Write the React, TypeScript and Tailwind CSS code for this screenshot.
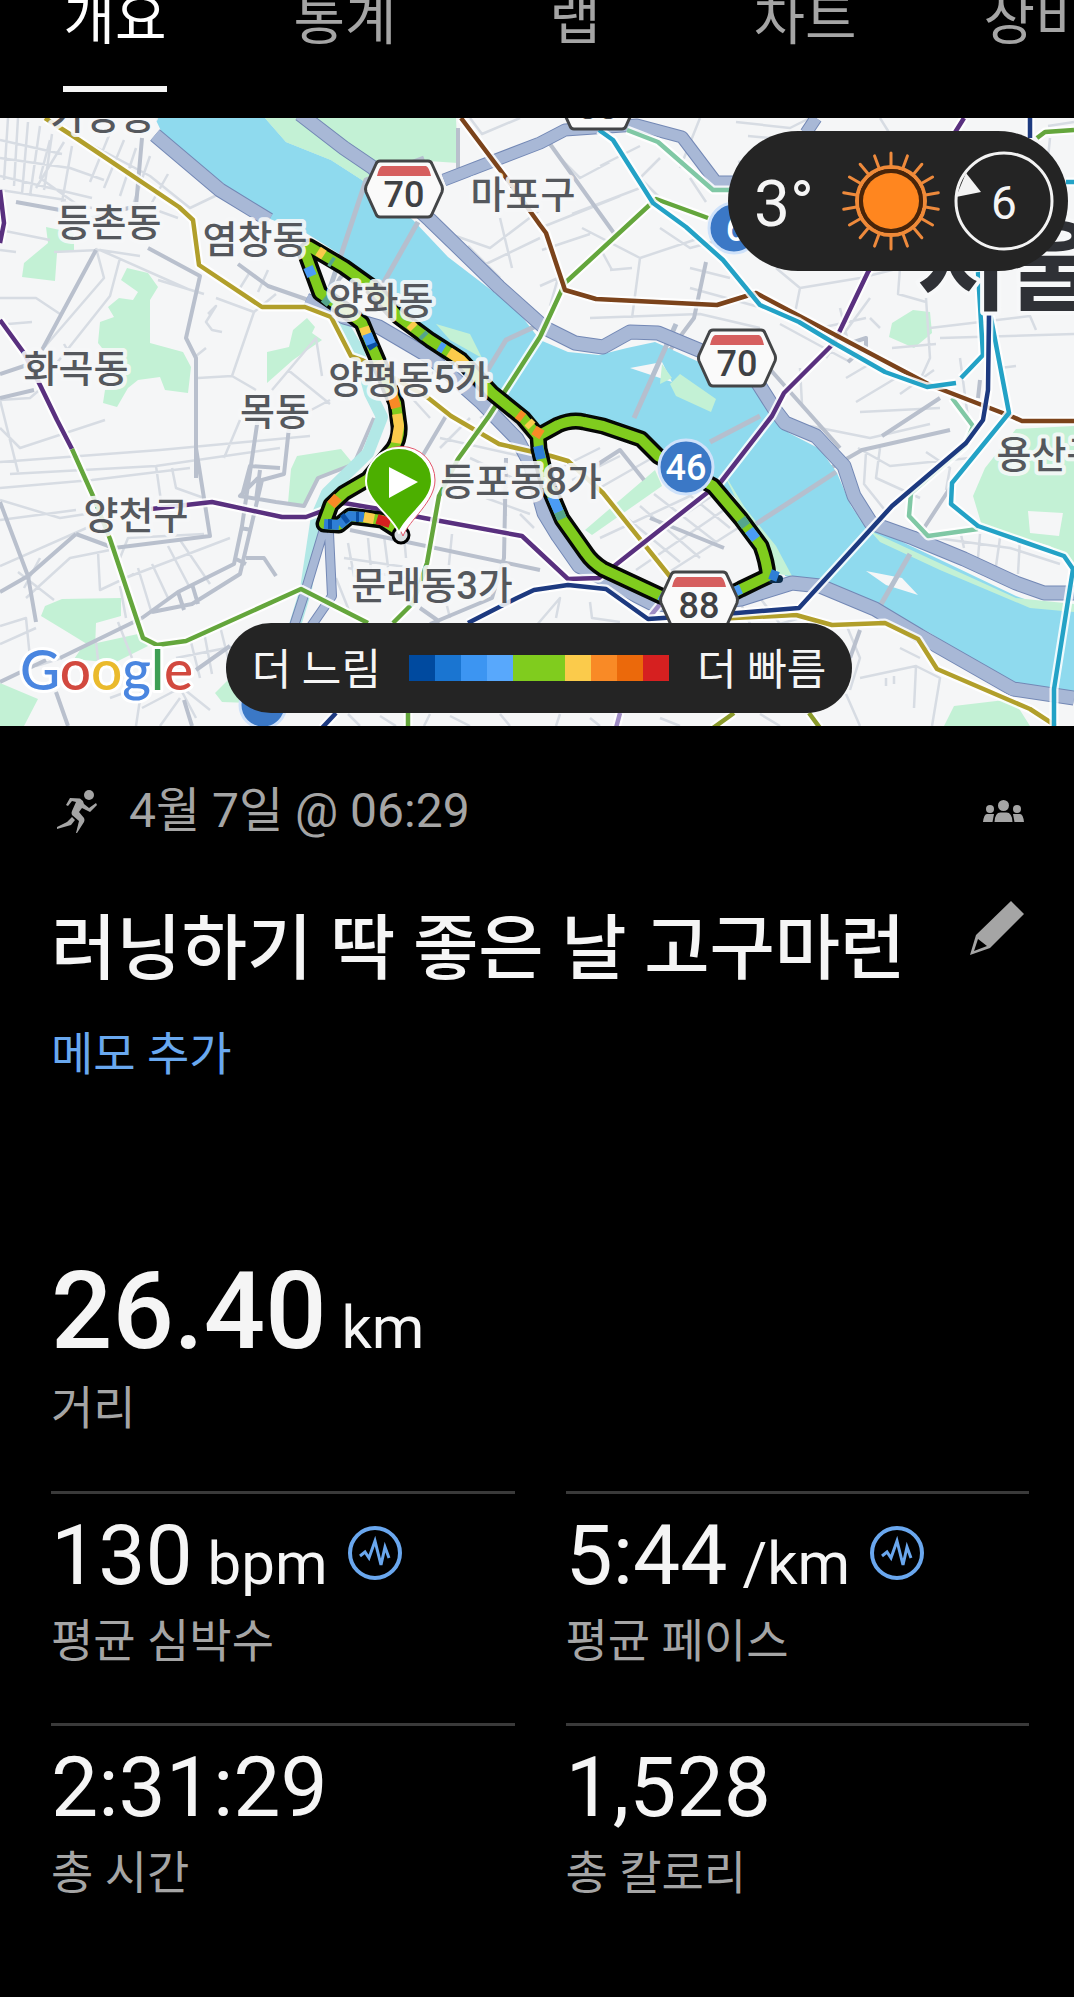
import type { ReactNode } from 'react';

const tabs = ['개요', '통계', '랩', '차트', '장비'];

const paceScale = [
  'bg-[#004a9f]',
  'bg-[#1a75d1]',
  'bg-[#3c95f2]',
  'bg-[#58a8fc]',
  'bg-[#80cc1e]',
  'bg-[#80cc1e]',
  'bg-[#fbcb4b]',
  'bg-[#f98a26]',
  'bg-[#eb690b]',
  'bg-[#d62020]',
];

const stats = [
  { value: '130', unit: 'bpm', label: '평균 심박수', chart: true },
  { value: '5:44', unit: '/km', label: '평균 페이스', chart: true },
  { value: '2:31:29', label: '총 시간' },
  { value: '1,528', label: '총 칼로리' },
];

const parks = [
  'M46 109L74 115V132L57 135L55 163L22 159L24 145L48 125Z',
  'M127 150L148 155L158 169L150 182V225L183 234L191 249L188 275L165 272L160 259L138 262L128 270L117 289L103 285L105 272L114 269V245L98 225L100 204L114 199L108 189L119 180L133 182L138 174L121 162Z',
  'M307 200L315 209L312 215L322 222L293 242L267 265V234L289 229L293 212Z',
  'M265 0H456L458 45L413 42L375 75L362 62L331 42L286 24Z',
  'M45 488L62 481L121 480V498L96 505L95 531L69 515L41 498Z',
  'M83 528L138 516L148 528L114 545L74 541Z',
  'M0 565L38 581L24 608H0Z',
  'M215 575L240 550L250 585L222 584Z',
  'M297 338L341 331L355 348L320 358L303 388L288 385L291 351Z',
  'M913 192L930 194L932 215L914 230L889 219L892 205Z',
  'M1016 311L1074 308V445L1050 428L982 408L973 378L985 350Z',
  'M944 608L954 588L1013 581L1030 608Z',
  'M585 412L655 352L662 368L592 417Z',
];

const river =
  'M155 0H265L286 24L331 42L362 62L385 80L413 102L448 139L482 165L517 192L540 222L568 234L599 237L627 230L655 224L699 244L754 269L768 289L775 302L789 315L820 331L837 355L851 388L865 408L896 421L947 445L1016 478L1044 488H1074V573L1016 570L930 515L889 495L830 468L785 458L782 441L772 425L741 385L720 365L651 328L637 318L568 305L544 318L517 292L492 268L468 250L430 222L399 195L372 162L344 139L306 115L265 99L207 52L162 15Z';

const minorRoads = [
  'M0 22L62 36M0 40L70 50L104 62M0 58L92 80M0 72L66 82M8 0L4 62M18 0L14 68M28 4L22 76M40 8L30 78M52 16L44 72M64 24L36 70M72 28L62 84L92 90',
  'M50 22L40 60L82 90M90 26L150 58L190 90L240 66M112 10L90 64M124 22L104 70M136 30L120 78M150 38L134 84L178 100M168 56L150 88',
  'M0 112L50 122M0 132L16 134M54 134L100 132L140 138M100 132L190 172M96 130L104 160L42 232M120 140L110 178L56 246',
  'M0 180H36L60 196M8 206L32 204M64 226L72 240M0 282L30 280L44 268M0 282L18 354M0 310L20 330L105 302',
  'M158 162L204 176M216 180L254 194L232 258L198 260M254 194L276 176M232 258L256 272M240 170L250 154M258 174L268 152M208 196L216 188L206 204L212 212L222 214M288 252L330 286',
  'M272 272L316 220L322 258M330 282L296 300M196 238L206 230',
  'M0 344L160 332L310 318M10 356L156 348L280 330M0 370L92 362L190 350M156 348L162 390M172 350L176 370L204 380M0 382L60 400L86 396M224 340L240 302',
  'M0 402L76 392M0 448L100 404M24 470L40 440M54 482L18 454M98 434L100 472L134 456M120 440L128 420L204 416M138 450L152 496M152 446L168 480M168 428L190 470M180 422L210 466M120 462L230 420',
  'M26 480L70 440L110 432M0 508L26 500L30 540M0 526L36 510M36 548L62 540M96 524L100 560M118 504L132 540M120 468L126 500',
  'M110 580L142 568L136 608M142 590L180 570L196 600M170 560L210 592M180 580L160 608M190 520L200 560M204 514L212 556M220 508L228 540M176 540L236 528',
  'M348 425L354 458L420 470M368 420L372 462M384 418L390 464M344 440L426 452M348 450L416 462M404 418L406 440M336 460L352 500M440 460L450 500M452 416L448 456',
  'M480 300L500 290L530 320M440 320L520 338M470 340L530 368M500 350L506 398M486 380L530 396M520 396L534 410M470 300L440 330',
  'M420 260L470 240M410 278L430 300M450 116L490 130L540 92M468 128L500 160M486 146L540 120M500 100L512 150',
  'M470 0L482 16L520 0M560 40L580 60L610 44M600 48L640 28M572 96L640 70M582 110L640 140L700 120M640 140L632 200M610 152L632 150M600 130L612 152M590 200L700 196L760 210',
  'M660 40L640 60L660 80M690 60L706 84M700 0L680 50M540 110L620 78M542 132L590 116M540 168L558 160L550 188M660 110L690 130L720 122M690 150L730 160M690 170L770 192',
  'M736 4L790 10L810 0M748 18L790 22M738 44L760 40M880 0L890 16M1048 8L1074 4M1050 20L1046 60',
  'M776 150L800 170L794 200M800 170L860 160L900 150M820 210L866 200M826 240L870 180M840 190L850 232M870 200L880 210M800 250L802 286M780 206L850 244M846 260L880 240M892 230L936 226M926 180L930 240L920 262',
  'M930 210L1030 198L1036 212M940 220L1074 216M990 160L1000 190M900 276L934 252M856 284L896 260M1000 250L1016 248M860 294L940 290M900 150L898 176L926 184M960 240L968 300',
  'M810 308L870 320L930 306M858 330L890 348L970 340M866 334L864 366L888 396M880 330L876 360L920 380M926 334L950 350L946 372M936 420L1010 430L1060 446M960 412L964 430M980 416L978 440M1000 420L996 448M1020 420L1018 456',
  'M556 352L600 330M572 362L620 338M596 372L652 340M622 396L680 444M600 420L690 378M640 388L700 440M654 376L716 424M676 366L730 410M620 440L712 378M636 452L724 392M666 456L738 410',
  'M600 472L640 460M590 484L592 500L620 504M536 508L560 480L556 500M740 484L752 510M760 480L780 506L800 500M772 540L800 560L850 536M846 506L860 540L850 572M860 560L916 548L914 590M916 548L940 560L932 608M900 530L920 540M846 576L860 608M886 560V568M894 558V566M760 596L780 608M660 600L680 608M590 600L600 608M560 596L556 608M348 596L360 608M380 598L396 608M430 596L424 608M450 598L470 608M500 596L510 608',
];

const mainRoads = [
  'M16 84L60 92M96 132L42 232M148 130L200 158L186 220L196 240L196 360M92 100L136 88L142 20M238 146L268 168L320 186',
  'M0 256L30 246M0 280L34 272',
  'M76 416L28 458L0 474M76 416L114 430L210 418L196 330M0 384L28 458L36 504M142 500L178 474L234 446L242 408L258 300M152 494L192 486L240 456L262 362L284 356L290 300M258 360L240 378L276 384L304 388L318 360L354 346L374 300M242 378L250 348L280 350M260 352L256 382M240 410L252 412M234 440L246 446M246 440H264L276 458',
  'M60 540L142 500M0 564L46 542M56 574L68 608M184 582L192 608M196 552L230 528M178 474L184 492M192 466L198 486',
  'M350 412L540 452M412 60L394 110L340 160L330 178M458 10V50M550 26L616 118M420 342L446 298M506 340L504 440L492 480L430 506M420 490L440 504',
  'M706 144L694 200L670 232L634 302M760 240L840 330M820 356L862 332L950 312M882 318L940 280M924 410L950 370M842 228L866 220V228L848 244M592 350L620 332L644 362M650 400L724 430M860 512L850 540M978 280L980 262',
];

const bridges = [
  'M424 40L366 62L330 170M418 104L376 178M534 209L506 222L484 258',
  'M676 206L634 300M710 324L760 298M756 406L836 354M910 436L880 488',
];

const southHighway =
  'M155 17L220 72L269 102M306 182L344 199L379 209L430 239L482 285L517 321L530 345L544 395L558 418L579 448L651 485L675 488L741 481L792 465L820 468L875 491L920 518L1013 571L1074 580';
const northHighway =
  'M300 -4L344 30L372 49L430 102L499 169L545 210L575 225L603 229L630 214L658 215L699 232L754 259L775 292L785 305L816 318L844 348L854 378L871 405L913 420L964 441L1016 465L1044 475H1074';
const linkHighway = 'M444 62L540 25L565 12L637 7L682 19L716 64H740M816 0L806 15';
const streamHighway = 'M324 411L306 471L290 520M329 415L332 478L303 520';

const subways = [
  { color: '#80c8a5', d: 'M627 12L658 24L713 72H735M952 280L973 308L965 328L911 375L909 398L928 418L978 411' },
  {
    color: '#b19f2b',
    d: 'M45 0L76 20L179 89L193 102L199 147L262 189H305L331 199L351 238L362 242L427 279L451 298L499 326L551 338L568 343L603 375L672 461L700 502L734 500L796 497L832 507L885 505L918 521L937 551L1030 591L1056 608',
  },
  { color: '#8a9a2b', d: 'M734 595L713 610M809 595L820 610' },
  { color: '#9f8cc4', d: 'M648 501L661 485M620 595L616 610' },
  {
    color: '#59307f',
    d: 'M0 72L4 105L0 125M0 202L24 235L41 269L57 302L72 331M151 391L212 384L282 399H306L344 385L379 391L424 400L522 418L568 461L599 460L703 378L720 365L772 298L784 275L834 225L868 154L964 0',
  },
  {
    color: '#64a63c',
    d: 'M72 331L93 378L110 421L143 520L157 527L186 523L301 471L368 505M393 505L413 485L427 445L439 378L458 341L489 298L540 219L565 165L656 81L708 100M1037 20L1045 14L1074 12M408 595V610',
  },
  {
    color: '#7b431b',
    d: 'M461 0L510 65L540 107L546 115L565 172L596 181L717 187L756 175L930 267L1013 299L1022 303H1074',
  },
  {
    color: '#23a2c6',
    d: 'M599 12L613 22L653 85L686 109L723 142L760 187L799 204L834 225L885 254L927 269L956 265M961 260L983 237L978 154M990 195L1009 295L952 365L951 386L978 408L1064 438L1073 451L1054 571V610M1066 64H1074',
  },
  {
    color: '#1d3a80',
    d: 'M1030 0V20M989 195L988 272L983 302L966 325L892 388L799 490L737 495L648 501L606 471L568 467L534 472L517 480L468 505M336 595L322 610',
  },
];

const track =
  'M396 411L382 402L350 398L339 407L324 406L331 387L344 375L368 361L393 331Q400 320 399 308L396 285L382 252L372 229L362 205L345 192L320 175L305 134L310 129L344 149L372 169L399 199L430 222L461 242L492 275L523 300L538 318L558 307Q572 301 584 304L603 308L641 321L658 338L713 368L741 401L761 428Q767 444 768 458L741 471L700 492L661 478L603 451Q592 444 586 435L562 401L548 368L539 331L538 318';

const trackColors = [
  { color: '#2f7fd6', d: 'M324 406L339 407M339 407L350 398L364 399M778 459L770 456M538 328L541 341' },
  { color: '#0a4ea3', d: 'M328 406H332M343 402L347 399M356 399H359M374 230L370 224' },
  { color: '#f98a26', d: 'M331 387L338 379M392 275L396 290M518 296L523 300M534 312L542 317' },
  { color: '#fbcb4b', d: 'M364 399L374 401M364 209L367 218M378 243L382 252M397 296L399 308L396 325M449 234L461 242L466 247M528 304L532 308M318 133L324 137M410 206L414 210' },
  { color: '#d62020', d: 'M377 401L390 405' },
  { color: '#4b9cf5', d: 'M308 149L312 158M367 216L371 226M439 228L444 231M552 378L559 394M749 412L756 421M734 474L741 471M660 477L665 480M663 343L680 349' },
  { color: '#55a58c', d: 'M324 180L330 185M330 143L333 145M422 216L425 219M559 394L562 401M741 401L746 408' },
];

const places = [
  { name: '가양동', x: 103, y: 11 },
  { name: '등촌동', x: 109, y: 118 },
  { name: '염창동', x: 255, y: 135 },
  { name: '양화동', x: 381, y: 196 },
  { name: '화곡동', x: 76, y: 264 },
  { name: '양평동5가', x: 409, y: 275 },
  { name: '목동', x: 275, y: 307 },
  { name: '양천구', x: 136, y: 411 },
  { name: '등포동8가', x: 521, y: 377 },
  { name: '문래동3가', x: 432, y: 481 },
  { name: '마포구', x: 523, y: 90 },
  { name: '용산구', x: 1049, y: 350 },
];

function RoadShield({ x, y, children }: { x: number; y: number; children: string }) {
  return (
    <g transform={`translate(${x} ${y})`}>
      <path
        d="M-24 -28H24Q27 -28 28 -25L38 -3Q39 0 38 3L28 25Q27 28 24 28H-24Q-27 28 -28 25L-38 3Q-39 0 -38 -3L-28 -25Q-27 -28 -24 -28Z"
        fill="#fafafa"
        stroke="#434547"
        strokeWidth="3"
      />
      <path d="M-22 -23H22Q25 -22 27 -13H-27Q-25 -22 -22 -23Z" fill="#d65f5f" />
      <text y="18" textAnchor="middle" fontSize="36" fontWeight="500" fill="#3f4144">
        {children}
      </text>
    </g>
  );
}

function RouteMap() {
  return (
    <svg
      viewBox="0 0 1074 608"
      className="block w-full font-[Roboto,'Noto_Sans_CJK_KR',sans-serif]"
      role="img"
      aria-label="러닝 경로 지도"
      fill="none"
      strokeLinejoin="round"
    >
      <rect width="1074" height="608" fill="#f5f6f7" />
      <path d={parks.join('')} fill="#c3f1d5" />
      <path d="M1028 393L1063 395L1059 418L1030 415Z" fill="#f5f6f7" />
      <path d={minorRoads.join('')} stroke="#d7dce3" strokeWidth="2.5" />
      <path d={mainRoads.join('')} stroke="#b9c0cd" strokeWidth="4" />

      {/* 한강과 안양천 */}
      <path d={river} fill="#8fdaee" />
      <path d="M265 0L286 24L331 42L362 62L385 84L376 60L330 20L300 0Z" fill="#c3f1d5" />
      <path d="M436 206L470 216L482 240L450 222Z" fill="#c3f1d5" />
      <path d="M722 352L745 390L776 428L792 458L778 456L766 425L738 385Z" fill="#c3f1d5" />
      <path d="M855 396L868 412L950 450L1016 480L1074 486V494L1030 490L940 452L880 424Z" fill="#c3f1d5" />
      <path d="M630 250L662 244L672 264Z" fill="#f5f6f7" />
      <path d="M680 256L716 281L711 294L676 278L670 266ZM662 246L672 260L660 266Z" fill="#c3f1d5" />
      <path d="M866 453L902 460L918 477L886 467Z" fill="#f5f6f7" />
      <path d="M334 192L358 232L370 275L382 299L368 335L327 375L317 398L306 471L270 590" stroke="#b2e8e6" strokeWidth="12" />
      <path d={bridges.join('')} stroke="#b5bfce" strokeWidth="5" />

      {/* 고속화도로 */}
      <g stroke="#7388b5">
        <path d={southHighway + northHighway} strokeWidth="15" />
        <path d={linkHighway} strokeWidth="13" />
        <path d={streamHighway} strokeWidth="10" />
      </g>
      <g stroke="#a8b8d6">
        <path d={southHighway + northHighway} strokeWidth="13" />
        <path d={linkHighway} strokeWidth="11" />
        <path d={streamHighway} strokeWidth="8" />
      </g>

      {/* 지하철 */}
      {subways.map((line) => (
        <g key={line.color}>
          <path d={line.d} stroke="#ffffff" strokeOpacity="0.85" strokeWidth="9" />
          <path d={line.d} stroke={line.color} strokeWidth="4.5" />
        </g>
      ))}

      {/* 달린 경로 */}
      <path d={track} stroke="#050805" strokeWidth="17" strokeLinecap="round" />
      <path d="M772 461L779 461" stroke="#0b2b4a" strokeWidth="8" strokeLinecap="round" />
      <path d={track} stroke="#80cc1e" strokeWidth="10" />
      {trackColors.map((part) => (
        <path key={part.color} d={part.d} stroke={part.color} strokeWidth="10" />
      ))}

      <g fontSize="38" fontWeight="500" fill="#55585d" stroke="#f7f8f9" strokeWidth="8" strokeOpacity="0.9" textAnchor="middle" paintOrder="stroke">
        {places.map((place) => (
          <text key={place.name} x={place.x} y={place.y}>
            {place.name}
          </text>
        ))}
      </g>
      <text x="917" y="184" fontSize="98" fontWeight="700" fill="#2f3136" stroke="#f7f8f9" strokeWidth="8" paintOrder="stroke">
        서울
      </text>

      <RoadShield x={404} y={71}>70</RoadShield>
      <RoadShield x={737} y={240}>70</RoadShield>
      <RoadShield x={699} y={482}>88</RoadShield>
      <RoadShield x={598} y={-17}>88</RoadShield>

      <g fill="#3b78c6" stroke="#cfe2fa" strokeWidth="3">
        <circle cx="686" cy="349" r="27" />
        <circle cx="734" cy="110" r="25" />
        <circle cx="263" cy="587" r="23" />
      </g>
      <g fill="#ffffff" fontSize="36" fontWeight="500" textAnchor="middle">
        <text x="686" y="362">46</text>
        <text x="736" y="123">6</text>
      </g>

      {/* 출발 핀 */}
      <circle cx="401" cy="417" r="8" fill="#d9dde0" stroke="#000000" strokeWidth="3" />
      <path d="M403 418C397 402 368 384 368 362A33 33 0 0 1 435 362C435 384 409 402 403 418Z" fill="#ffffff" stroke="#e2566b" strokeWidth="1" />
      <path d="M399 415C393 398 366 384 366 363A33 33 0 0 1 432 363C432 384 405 398 399 415Z" fill="#4caf00" stroke="#ffffff" strokeWidth="2" />
      <path d="M389 349L418 364L389 380Z" fill="#ffffff" />

      <text x="20" y="572" fontSize="55" fontWeight="500" stroke="#ffffff" strokeWidth="6" paintOrder="stroke" className="font-[Lato,sans-serif]">
        <tspan fill="#4a86e0">G</tspan>
        <tspan fill="#d2493f">o</tspan>
        <tspan fill="#eaba2c">o</tspan>
        <tspan fill="#4a86e0">g</tspan>
        <tspan fill="#3e9f55">l</tspan>
        <tspan fill="#d2493f">e</tspan>
      </text>
    </svg>
  );
}

function SunIcon() {
  const rays = Array.from({ length: 18 }, (_, i) => i * 20);
  return (
    <svg viewBox="-50 -50 100 100" className="size-[100px]" aria-hidden="true">
      <g stroke="#ee8a3c" strokeWidth="3" strokeLinecap="round">
        {rays.map((angle) => (
          <line key={angle} y1="-35" y2="-48" transform={`rotate(${angle})`} />
        ))}
      </g>
      <circle r="34" fill="none" stroke="#f08a38" strokeWidth="4" />
      <circle r="30" fill="none" stroke="#4a2408" strokeWidth="4" />
      <circle r="28" fill="#ff861f" />
    </svg>
  );
}

function WindGauge({ speed }: { speed: number }) {
  return (
    <div className="relative flex size-[102px] items-center justify-center">
      <svg viewBox="-51 -51 102 102" className="absolute inset-0" aria-hidden="true">
        <circle r="48" fill="none" stroke="#f3f3f3" strokeWidth="3" />
        <path d="M-48 -4L-38 -28L-23 -9Z" fill="#f3f3f3" />
      </svg>
      <span className="relative pt-1 text-[46px] leading-none">{speed}</span>
    </div>
  );
}

function RunnerIcon() {
  return (
    <svg viewBox="0 0 40 43" className="h-[43px] w-10" fill="#a5a5a5" aria-hidden="true">
      <circle cx="32" cy="5" r="5" />
      <path d="M13 8L23 8.500Q26 10 27 14L32 18L39 13L40 15L33 22L27 19L25 18L22 22L27 28Q28 30 27 32L20 43H19L22 31L15 25Q14 23 15 21L19 12L15 11L11 16L9 15Z" />
      <path d="M15 27L18 30L14 35L0 39V37L10 32Z" />
    </svg>
  );
}

function GroupIcon() {
  return (
    <svg viewBox="0 0 41 22" className="h-[22px] w-[41px]" fill="#a5a5a5" aria-hidden="true">
      <circle cx="20.500" cy="5.500" r="5.500" />
      <circle cx="7" cy="9" r="4" />
      <circle cx="34" cy="9" r="4" />
      <path d="M11.500 22Q12 12 18 12.500H23Q29 12 29.500 22Z" />
      <path d="M0 22Q1 14 4 14H11L9.500 22Z" />
      <path d="M41 22Q40 14 37 14H30L31.500 22Z" />
    </svg>
  );
}

function PencilIcon() {
  return (
    <svg viewBox="0 0 54 54" className="size-[54px]" fill="#a5a5a5" aria-hidden="true">
      <path d="M41 0L54 13L20 47L0 54L6 34ZM8 38L4 50L17 45Z" fillRule="evenodd" />
    </svg>
  );
}

function ChartIcon() {
  return (
    <svg viewBox="0 0 54 54" className="size-[54px]" fill="none" stroke="#6aa7ee" aria-hidden="true">
      <circle cx="27" cy="27" r="25" strokeWidth="4" />
      <path d="M12 30L17 26L21 32L27 15L33 39L37 21L41 32" strokeWidth="3" />
    </svg>
  );
}

function Stat({ value, unit, label, children }: { value: string; unit?: string; label: string; children?: ReactNode }) {
  return (
    <div className="h-[232px] border-t-3 border-[#3a3a3a] pt-5">
      <div className="flex gap-5">
        <p className="text-[84px] leading-[84px] whitespace-nowrap">
          {value}
          {unit && <span className="text-[60px] leading-none"> {unit}</span>}
        </p>
        {children && (
          <button type="button" className="mt-3 h-[54px]" aria-label={`${label} 차트`}>
            {children}
          </button>
        )}
      </div>
      <p className="mt-4 text-[46px] leading-[54px] text-[#a5a5a5]">{label}</p>
    </div>
  );
}

export default function App() {
  return (
    <div className="min-h-screen overflow-hidden bg-black font-[Roboto,'Noto_Sans_CJK_KR',sans-serif] text-[#f5f5f5]">
      <nav className="flex h-[118px] overflow-hidden">
        {tabs.map((tab, i) => (
          <div key={tab} className="flex w-[230px] shrink-0 justify-center">
            <a
              href="#"
              className={`-mt-2 flex h-[100px] flex-col justify-between text-[56px] leading-[56px] ${
                i === 0 ? 'border-b-6 border-[#f5f5f5] text-white' : 'text-[#a5a5a5]'
              }`}
            >
              {tab}
            </a>
          </div>
        ))}
      </nav>

      <section className="relative">
        <RouteMap />
        <div className="absolute top-[13px] right-[6px] flex h-[140px] w-[340px] items-center justify-between rounded-full bg-[#242424] pr-[13px] pl-[26px]">
          <span className="pt-2 text-[64px] leading-none">3°</span>
          <div className="flex items-center gap-3">
            <SunIcon />
            <WindGauge speed={6} />
          </div>
        </div>
        <div className="absolute inset-x-0 bottom-[13px] flex justify-center pl-1">
          <div className="flex h-[90px] items-center gap-7 rounded-full bg-[#242424] px-[26px] text-[43px] leading-none">
            <span className="pt-1">더 느림</span>
            <div className="flex">
              {paceScale.map((color, i) => (
                <span key={i} className={`h-[26px] w-[26px] ${color}`} />
              ))}
            </div>
            <span className="pt-1">더 빠름</span>
          </div>
        </div>
      </section>

      <main className="pr-[45px] pl-[51px]">
        <div className="flex items-center justify-between pt-[55px] pr-[5px] pl-[6px]">
          <div className="flex items-center gap-8 text-[#a5a5a5]">
            <RunnerIcon />
            <span className="text-[48px] leading-[60px]">4월 7일 @ 06:29</span>
          </div>
          <GroupIcon />
        </div>

        <div className="mt-[60px] flex items-start justify-between pr-[5px]">
          <h1 className="pt-[3px] text-[71px] leading-[90px] font-medium">러닝하기 딱 좋은 날 고구마런</h1>
          <button type="button" aria-label="제목 편집">
            <PencilIcon />
          </button>
        </div>

        <a href="#" className="mt-[33px] block w-fit text-[46px] leading-[54px] text-[#69a8ef]">
          메모 추가
        </a>

        <div className="mt-[176px]">
          <p className="text-[108px] leading-[108px] font-medium">
            26.40<span className="text-[60px] leading-none font-normal"> km</span>
          </p>
          <p className="mt-4 text-[46px] leading-[54px] text-[#a5a5a5]">거리</p>
        </div>

        <div className="mt-[56px] grid grid-cols-2 gap-x-[51px]">
          {stats.map((stat) => (
            <Stat key={stat.label} value={stat.value} unit={stat.unit} label={stat.label}>
              {stat.chart && <ChartIcon />}
            </Stat>
          ))}
        </div>
      </main>
    </div>
  );
}
